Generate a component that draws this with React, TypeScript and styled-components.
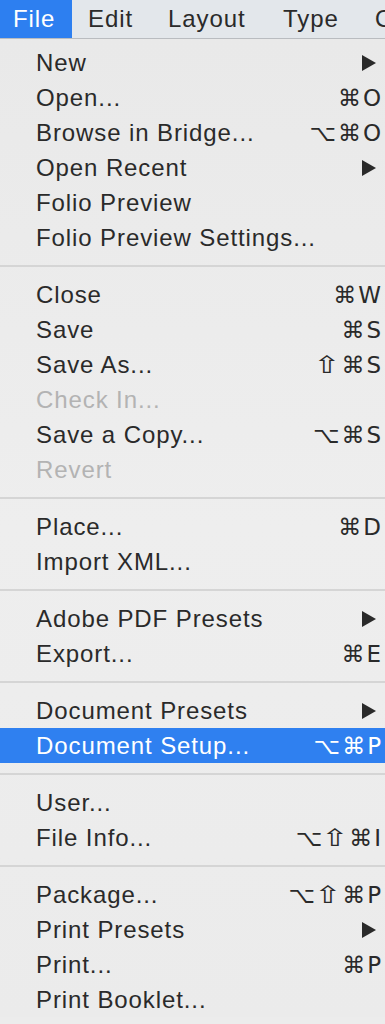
import React from "react";
import styled, { createGlobalStyle } from "styled-components";

const Global = createGlobalStyle`
  html, body { margin: 0; padding: 0; background: #ececec; }
  body { font-family: "Liberation Sans", Arial, sans-serif; -webkit-font-smoothing: antialiased; }
`;

const Page = styled.div`
  width: 385px;
  height: 1024px;
  overflow: hidden;
  background: #ececec;
  font-family: "Liberation Sans", Arial, sans-serif;
`;

const MenuBar = styled.div`
  display: flex;
  align-items: stretch;
  height: 38px;
  background: #e3e7eb;
  border-bottom: 1px solid #b9bcc0;
  white-space: nowrap;
`;

const BarItem = styled.div<{ $active?: boolean; $w: number }>`
  flex: 0 0 ${(p) => p.$w}px;
  display: flex;
  align-items: center;
  padding-left: ${(p) => (p.$active ? 13 : 16)}px;
  box-sizing: border-box;
  font-size: 24px;
  letter-spacing: 0.9px;
  color: ${(p) => (p.$active ? "#ffffff" : "#2a2a2a")};
  background: ${(p) => (p.$active ? "#2d7ff0" : "transparent")};
`;

const Menu = styled.div`
  padding-top: 6px;
  background: linear-gradient(180deg, #e9e9e9 0%, #eeeeee 50%, #ebebeb 100%);
`;

const Row = styled.div<{ $selected?: boolean; $disabled?: boolean }>`
  display: flex;
  align-items: center;
  height: 35px;
  padding-left: 36px;
  padding-right: 2px;
  font-size: 24px;
  letter-spacing: 0.9px;
  white-space: nowrap;
  color: ${(p) => (p.$selected ? "#ffffff" : p.$disabled ? "#b3b3b3" : "#2a2a2a")};
  background: ${(p) => (p.$selected ? "#2f80f0" : "transparent")};
`;

const Label = styled.span`
  flex: 1 1 auto;
`;

const Shortcut = styled.span`
  flex: 0 0 auto;
  display: flex;
  align-items: center;
  font-family: "DejaVu Sans", "Liberation Sans", sans-serif;
  font-size: 23px;
  letter-spacing: 2px;
`;

const Shift = styled.span`
  display: inline-block;
  width: 22px;
  margin-right: 3px;
  text-align: center;
  letter-spacing: 0;
  transform: scale(1.4, 1.05);
`;

const Arrow = styled.span`
  flex: 0 0 auto;
  width: 0;
  height: 0;
  margin-right: 7px;
  border-top: 8px solid transparent;
  border-bottom: 8px solid transparent;
  border-left: 14px solid #2a2a2a;
`;

const Separator = styled.div`
  height: 22px;
  display: flex;
  align-items: center;
  &::after {
    content: "";
    flex: 1;
    height: 2px;
    background: #d5d5d5;
  }
`;

type Item =
  | { sep: true }
  | { label: string; sc?: string; sub?: boolean; disabled?: boolean; selected?: boolean };

const items: Item[] = [
  { label: "New", sub: true },
  { label: "Open...", sc: "⌘O" },
  { label: "Browse in Bridge...", sc: "⌥⌘O" },
  { label: "Open Recent", sub: true },
  { label: "Folio Preview" },
  { label: "Folio Preview Settings..." },
  { sep: true },
  { label: "Close", sc: "⌘W" },
  { label: "Save", sc: "⌘S" },
  { label: "Save As...", sc: "⇧⌘S" },
  { label: "Check In...", disabled: true },
  { label: "Save a Copy...", sc: "⌥⌘S" },
  { label: "Revert", disabled: true },
  { sep: true },
  { label: "Place...", sc: "⌘D" },
  { label: "Import XML..." },
  { sep: true },
  { label: "Adobe PDF Presets", sub: true },
  { label: "Export...", sc: "⌘E" },
  { sep: true },
  { label: "Document Presets", sub: true },
  { label: "Document Setup...", sc: "⌥⌘P", selected: true },
  { sep: true },
  { label: "User..." },
  { label: "File Info...", sc: "⌥⇧⌘I" },
  { sep: true },
  { label: "Package...", sc: "⌥⇧⌘P" },
  { label: "Print Presets", sub: true },
  { label: "Print...", sc: "⌘P" },
  { label: "Print Booklet..." },
];

function Keys({ sc }: { sc: string }) {
  return (
    <Shortcut>
      {Array.from(sc).map((ch, i) =>
        ch === "⇧" ? <Shift key={i}>⇧</Shift> : <span key={i}>{ch}</span>
      )}
    </Shortcut>
  );
}

export default function App() {
  return (
    <Page>
      <Global />
      <MenuBar>
        <BarItem $active $w={72}>File</BarItem>
        <BarItem $w={80}>Edit</BarItem>
        <BarItem $w={115}>Layout</BarItem>
        <BarItem $w={92}>Type</BarItem>
        <BarItem $w={60}>Object</BarItem>
      </MenuBar>
      <Menu>
        {items.map((it, i) =>
          "sep" in it ? (
            <Separator key={i} />
          ) : (
            <Row key={i} $selected={it.selected} $disabled={it.disabled}>
              <Label>{it.label}</Label>
              {it.sc && <Keys sc={it.sc} />}
              {it.sub && <Arrow />}
            </Row>
          )
        )}
      </Menu>
    </Page>
  );
}
